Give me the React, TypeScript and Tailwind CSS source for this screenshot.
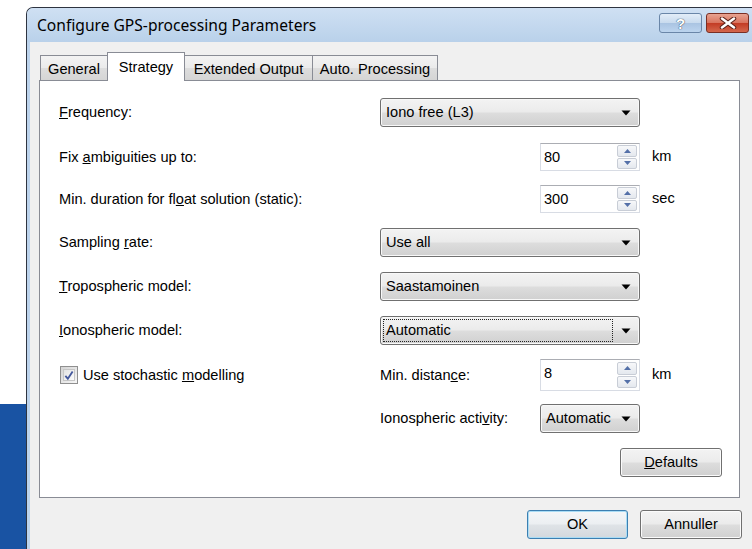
import React from 'react'

const body = { fontFamily: '"Liberation Sans", Arial, sans-serif' }

const comboBg =
  'bg-[linear-gradient(to_bottom,#f3f3f3_0%,#ebebeb_48%,#dddddd_52%,#d0d0d0_100%)]'

const Arrow: React.FC = () => (
  <svg width="10" height="6" viewBox="0 0 10 6" className="shrink-0">
    <path d="M0.5 0.5 H9.5 L5 5.5 Z" fill="#000" />
  </svg>
)

const Combo: React.FC<{ value: string; width: string; focused?: boolean }> = ({ value, width, focused }) => (
  <div
    className={`${width} h-[29px] flex items-center rounded-[3px] border border-[#707070] ${comboBg} pl-[2px] pr-[8px] shadow-[inset_0_0_0_1px_#f8f8f8]`}
  >
    <div
      className={`flex-1 h-[23px] flex items-center pl-[2px] mr-[8px] ${
        focused ? 'border border-dotted border-[#222]' : 'border border-transparent'
      }`}
    >
      <span className="text-[14.6px] text-black leading-none">{value}</span>
    </div>
    <Arrow />
  </div>
)

const SpinArrow: React.FC<{ up?: boolean }> = ({ up }) => (
  <svg width="7" height="4" viewBox="0 0 7 4">
    <path d={up ? 'M0 4 L3.5 0 L7 4 Z' : 'M0 0 L7 0 L3.5 4 Z'} fill="#5470a8" />
  </svg>
)

const Spinner: React.FC<{ value: string; tall?: boolean }> = ({ value, tall }) => (
  <div
    className={`w-[100px] ${
      tall ? 'h-[32px] items-start' : 'h-[28px] items-center'
    } flex bg-white border border-[#d8dce4] border-t-[#abadb3]`}
  >
    <span className={`flex-1 pl-[3px] text-[14.6px] leading-none text-black ${tall ? 'pt-[6px]' : ''}`}>
      {value}
    </span>
    <div className={`w-[20px] ${tall ? 'h-[26px] mt-[2px]' : 'h-[24px]'} mr-[2px] flex flex-col gap-[1px]`}>
      <div className="flex-1 flex items-center justify-center border border-[#c8cdd6] rounded-[2px] bg-[linear-gradient(to_bottom,#f7f8fa,#e4e8ee)]">
        <SpinArrow up />
      </div>
      <div className="flex-1 flex items-center justify-center border border-[#c8cdd6] rounded-[2px] bg-[linear-gradient(to_bottom,#f7f8fa,#e4e8ee)]">
        <SpinArrow />
      </div>
    </div>
  </div>
)

const Button: React.FC<{ children: React.ReactNode; width: string; primary?: boolean }> = ({
  children,
  width,
  primary,
}) => (
  <div
    className={`${width} h-[29px] flex items-center justify-center rounded-[3px] border ${
      primary
        ? 'border-[#3c7fb1] shadow-[inset_0_0_0_1px_#a9dcf5] bg-[linear-gradient(to_bottom,#f4f6f8_0%,#eceff2_48%,#dfe3e7_52%,#d3d8dd_100%)]'
        : `border-[#707070] shadow-[inset_0_0_0_1px_#fbfbfb] ${comboBg}`
    } text-[14.6px] text-black`}
  >
    {children}
  </div>
)

const Row: React.FC<{ h: string; mt?: string; children: React.ReactNode }> = ({ h, mt = '', children }) => (
  <div className={`flex items-center ${h} ${mt}`}>{children}</div>
)

const Label: React.FC<{ children: React.ReactNode }> = ({ children }) => (
  <div className="w-[321px] shrink-0 -ml-px text-[14.6px] text-black leading-none">{children}</div>
)

const Tab: React.FC<{ label: string; width: string; active?: boolean }> = ({ label, width, active }) =>
  active ? (
    <div
      className={`${width} h-[29px] -mb-px -ml-px z-10 flex items-start pt-[4px] justify-center bg-white border border-b-0 border-[#898c95] text-[14.6px] text-black`}
    >
      {label}
    </div>
  ) : (
    <div
      className={`${width} h-[25px] -ml-px flex items-start pt-[3px] justify-center border border-b-0 border-[#898c95] bg-[linear-gradient(to_bottom,#f3f3f3_0%,#ebebeb_48%,#dddddd_52%,#d5d5d5_100%)] text-[14.6px] text-black`}
    >
      {label}
    </div>
  )

export default function App() {
  return (
    <div className="w-[752px] h-[549px] flex bg-white overflow-hidden" style={body}>
      {/* desktop strip left of the window */}
      <div className="w-[26px] shrink-0 flex flex-col">
        <div className="flex-1 bg-white" />
        <div className="h-[145px] bg-[#1953a3]" />
      </div>

      {/* dialog window */}
      <div className="flex-1 mt-[7px] flex flex-col border-l border-t border-[#2e3440] rounded-tl-[7px] bg-[#bcd3ec]">
        <div className="h-[34px] shrink-0 flex items-start rounded-tl-[6px] bg-[linear-gradient(to_bottom,#cfe0f3,#b9d1ea)] pl-[10px] pr-[3px]">
          <span
            className="pt-[10px] text-[15.6px] text-black leading-none"
            style={{ fontFamily: '"Noto Sans", "Open Sans", sans-serif' }}
          >
            Configure GPS-processing Parameters
          </span>
          <div className="ml-auto mt-[5px] flex gap-[4px]">
            <div className="w-[43px] h-[20px] rounded-[3px] border border-[#6a86a8] flex items-center justify-center bg-[linear-gradient(to_bottom,#e3edf8_0%,#c9dbee_48%,#aac4e2_52%,#bcd4ee_100%)]">
              <span
                className="text-[15px] font-bold leading-none text-white"
                style={{ textShadow: '0 0 1px #33445a, 0 0 1px #33445a' }}
              >
                ?
              </span>
            </div>
            <div className="w-[43px] h-[20px] rounded-[3px] border border-[#7a2f24] flex items-center justify-center bg-[linear-gradient(to_bottom,#e8a391_0%,#d97560_48%,#c33c25_52%,#d4674c_100%)]">
              <svg width="18" height="12" viewBox="0 0 18 12">
                <path d="M3 1.5 L15 10.5 M15 1.5 L3 10.5" stroke="#5a2018" strokeWidth="4.5" strokeLinecap="round" />
                <path d="M3 1.5 L15 10.5 M15 1.5 L3 10.5" stroke="#fff" strokeWidth="2.5" strokeLinecap="round" />
              </svg>
            </div>
          </div>
        </div>

        {/* client area */}
        <div className="flex-1 ml-[3px] flex flex-col bg-[#f0f0f0] pt-[10px]">
          <div className="flex items-end pl-[11px]">
            <Tab label="General" width="w-[68px]" />
            <Tab label="Strategy" width="w-[78px]" active />
            <Tab label="Extended Output" width="w-[129px]" />
            <Tab label="Auto. Processing" width="w-[126px]" />
          </div>

          <div className="ml-[9px] w-[701px] h-[418px] border border-[#898c95] bg-white flex flex-col pl-[20px] pt-[17px]">
            <Row h="h-[29px]">
              <Label>
                <u>F</u>requency:
              </Label>
              <Combo value="Iono free (L3)" width="w-[260px]" />
            </Row>
            <Row h="h-[28px]" mt="mt-[16px]">
              <Label>
                Fix <u>a</u>mbiguities up to:
              </Label>
              <div className="w-[160px]" />
              <Spinner value="80" />
              <span className="ml-[12px] text-[14.6px]">km</span>
            </Row>
            <Row h="h-[28px]" mt="mt-[14px]">
              <Label>
                Min. duration for fl<u>o</u>at solution (static):
              </Label>
              <div className="w-[160px]" />
              <Spinner value="300" />
              <span className="ml-[12px] text-[14.6px]">sec</span>
            </Row>
            <Row h="h-[29px]" mt="mt-[15px]">
              <Label>
                Sampling <u>r</u>ate:
              </Label>
              <Combo value="Use all" width="w-[260px]" />
            </Row>
            <Row h="h-[29px]" mt="mt-[15px]">
              <Label>
                <u>T</u>ropospheric model:
              </Label>
              <Combo value="Saastamoinen" width="w-[260px]" />
            </Row>
            <Row h="h-[29px]" mt="mt-[15px]">
              <Label>
                <u>I</u>onospheric model:
              </Label>
              <Combo value="Automatic" width="w-[260px]" focused />
            </Row>
            <Row h="h-[32px]" mt="mt-[14px]">
              <div className="w-[320px] shrink-0 flex items-center gap-[5px]">
                <div className="w-[18px] h-[18px] border border-[#8f8f8f] bg-[linear-gradient(135deg,#d4d4d4,#f6f6f6)] p-[2px]">
                  <div className="w-full h-full border border-[#c6c6c6] bg-[linear-gradient(135deg,#e3e3e3,#fbfbfb)] flex items-center justify-center">
                    <svg width="11" height="11" viewBox="0 0 11 11">
                      <path d="M1.5 6 L4.2 9 L9.5 1" stroke="#44589c" strokeWidth="2" fill="none" />
                    </svg>
                  </div>
                </div>
                <span className="text-[14.6px] text-black leading-none">
                  Use stochastic <u>m</u>odelling
                </span>
              </div>
              <div className="w-[160px] text-[14.6px] leading-none">
                Min. distan<u>c</u>e:
              </div>
              <Spinner value="8" tall />
              <span className="ml-[12px] text-[14.6px]">km</span>
            </Row>
            <Row h="h-[29px]" mt="mt-[13px]">
              <div className="w-[320px] shrink-0" />
              <div className="w-[160px] text-[14.6px] leading-none">
                Ionospheric acti<u>v</u>ity:
              </div>
              <Combo value="Automatic" width="w-[100px]" />
            </Row>
            <Row h="h-[29px]" mt="mt-[15px]">
              <div className="w-[560px] shrink-0" />
              <Button width="w-[102px]">
                <span>
                  <u>D</u>efaults
                </span>
              </Button>
            </Row>
          </div>

          <div className="flex justify-end gap-[12px] pr-[10px] mt-[12px]">
            <Button width="w-[101px]" primary>
              OK
            </Button>
            <Button width="w-[102px]">Annuller</Button>
          </div>
        </div>
      </div>
    </div>
  )
}
